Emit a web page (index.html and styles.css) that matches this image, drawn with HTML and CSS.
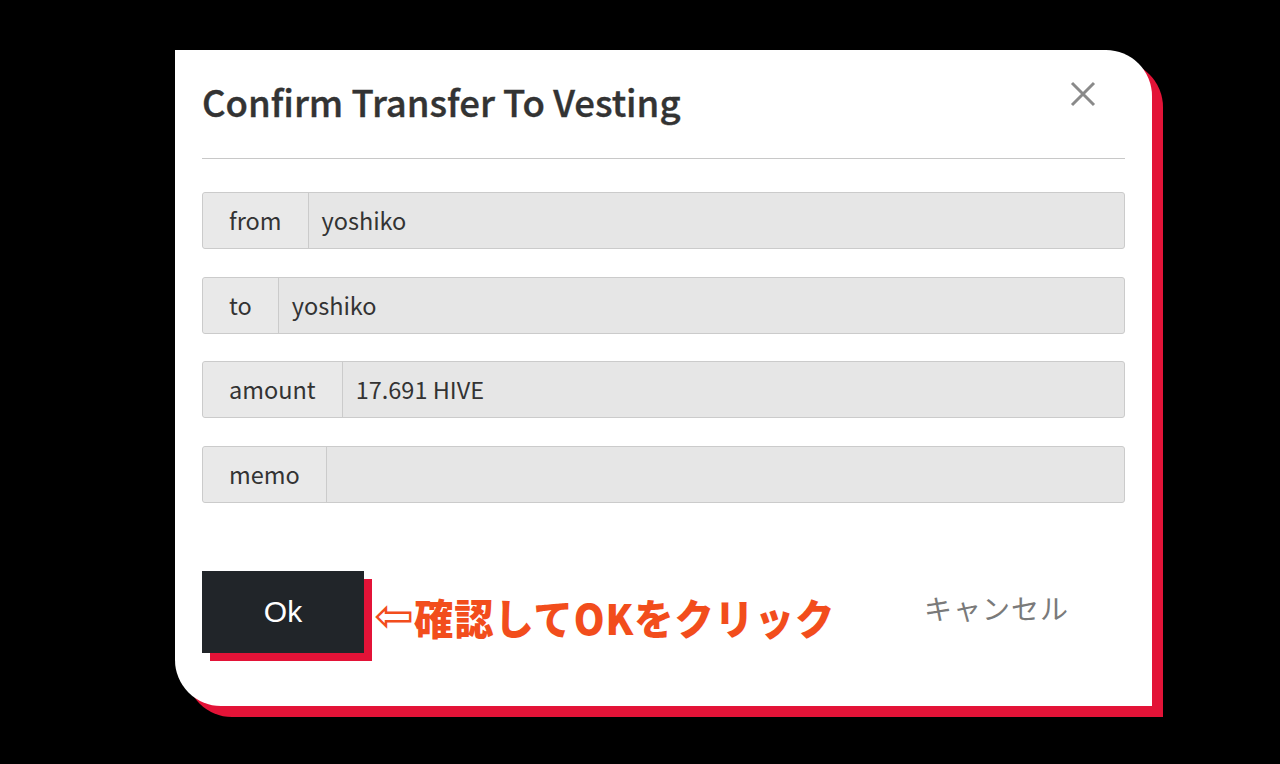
FILE: index.html
```html
<!DOCTYPE html>
<html lang="ja">
<head>
<meta charset="utf-8">
<title>Confirm Transfer To Vesting</title>
<link rel="stylesheet" href="styles.css">
</head>
<body>
<div class="overlay">
  <div class="modal">
    <div class="modal-header">
      <h2 class="title">Confirm Transfer To Vesting</h2>
      <button class="close" aria-label="close">
        <svg width="26" height="26" viewBox="0 0 26 26"><path d="M2 2 L24 24 M24 2 L2 24" stroke="#8a8a8a" stroke-width="3" fill="none"/></svg>
      </button>
    </div>
    <div class="fields">
      <div class="group"><span class="label">from</span><span class="value">yoshiko</span></div>
      <div class="group"><span class="label">to</span><span class="value">yoshiko</span></div>
      <div class="group"><span class="label">amount</span><span class="value">17.691 HIVE</span></div>
      <div class="group"><span class="label">memo</span><span class="value"></span></div>
    </div>
    <div class="footer">
      <button class="ok">Ok</button>
      <span class="note"><span class="arrow">⇦</span><span class="note-text">確認してOKをクリック</span></span>
      <span class="cancel">キャンセル</span>
    </div>
  </div>
</div>
</body>
</html>
```
FILE: styles.css
```css
html, body {
  margin: 0;
  padding: 0;
}
body {
  width: 1280px;
  height: 764px;
  background: #000;
  overflow: hidden;
  font-family: "Noto Sans CJK JP", "Noto Sans", sans-serif;
  color: #333;
}
.overlay {
  padding: 50px 0 0 175px;
}
.modal {
  width: 977px;
  height: 656px;
  box-sizing: border-box;
  background: #fff;
  border-radius: 0 46px 0 46px;
  box-shadow: 11px 11px 0 #e31337;
  padding: 0 27px;
}
.modal-header {
  display: flex;
  justify-content: space-between;
  align-items: flex-start;
  padding-top: 29px;
  padding-bottom: 33px;
  border-bottom: 1px solid #c8c8c8;
}
.title {
  margin: 0;
  font-size: 36.5px;
  line-height: 46px;
  font-weight: 500;
  -webkit-text-stroke: 0.4px #333;
  color: #333;
}
.close {
  background: none;
  border: 0;
  padding: 0;
  margin: 2px 29px 0 0;
  width: 26px;
  height: 26px;
  display: block;
}
.close svg { display: block; }
.fields {
  display: flex;
  flex-direction: column;
  gap: 27.7px;
  padding-top: 33px;
}
.group {
  display: flex;
  height: 57px;
  box-sizing: border-box;
  border: 1px solid #cbcbcb;
  border-radius: 3px;
  background: #e6e6e6;
  font-size: 23.5px;
  line-height: 55px;
}
.label {
  padding: 0 26px 0 26px;
  background: #e9e9e9;
  border-right: 1px solid #cbcbcb;
  border-radius: 3px 0 0 3px;
}
.value {
  flex: 1;
  padding-left: 13px;
}
.footer {
  display: flex;
  align-items: center;
  padding-top: 68px;
}
.ok {
  width: 162px;
  height: 82px;
  border: 0;
  background: #212529;
  color: #fff;
  font-family: "Liberation Sans", Arial, sans-serif;
  font-size: 30px;
  box-shadow: 8px 8px 0 #e31337;
  padding: 0;
}
.note {
  display: flex;
  align-items: center;
  margin-left: 10px;
  margin-top: 10px;
  color: #f24d1c;
}
.arrow {
  font-family: "DejaVu Sans", sans-serif;
  font-weight: 400;
  font-size: 48px;
  line-height: 46px;
  margin-top: -4px;
}
.note-text {
  display: inline-block;
  font-size: 42px;
  font-weight: 900;
  line-height: 46px;
  letter-spacing: 1px;
  transform: scaleX(0.935);
  transform-origin: left center;
  white-space: nowrap;
}
.cancel {
  margin-left: auto;
  margin-right: 56px;
  margin-top: -8px;
  font-size: 28px;
  color: #7a7a7a;
  letter-spacing: 1px;
}
```
